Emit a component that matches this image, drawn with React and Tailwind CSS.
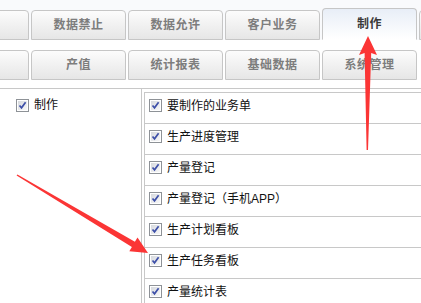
import React from "react";

const topTabs = ["", "数据禁止", "数据允许", "客户业务", "制作", ""];
const subTabs = ["", "产值", "统计报表", "基础数据", "系统管理"];
const items = [
  "要制作的业务单",
  "生产进度管理",
  "产量登记",
  "产量登记（手机APP）",
  "生产计划看板",
  "生产任务看板",
  "产量统计表",
];

const CheckBox = () => (
  <svg width="13" height="13" viewBox="0 0 13 13" className="shrink-0">
    <defs>
      <linearGradient id="cbFill" x1="0" y1="0" x2="1" y2="1">
        <stop offset="0" stopColor="#d6d9de" />
        <stop offset="1" stopColor="#f8f8f8" />
      </linearGradient>
    </defs>
    <rect x="0.5" y="0.5" width="12" height="12" fill="#fff" stroke="#8e9297" />
    <rect x="2" y="2" width="9" height="9" fill="url(#cbFill)" />
    <path d="M3.5 6.5 L5.5 8.8 L9.6 3.2" fill="none" stroke="#3d4fa8" strokeWidth="1.7" />
  </svg>
);

const Tab = ({ label, active, first }) => (
  <div
    className={
      "shrink-0 w-[95px] rounded-t-[4px] border border-[#c6c6c6] flex items-center justify-center text-[12px] font-bold tracking-[0.5px] " +
      (first ? "-ml-[66px] " : "") +
      (active
        ? "h-[32px] -mt-[2px] border-b-white bg-gradient-to-b from-[#e8eef7] to-white text-[#3a3a3a]"
        : "h-[30px] bg-gradient-to-b from-[#fcfcfc] to-[#e6e6e6] text-[#7d7d7d]")
    }
  >
    {label}
  </div>
);

export default function App() {
  return (
    <div
      className="relative w-[421px] h-[303px] overflow-hidden bg-white"
      style={{ fontFamily: '"Liberation Sans", "Noto Sans CJK SC", sans-serif' }}
    >
      <div className="bg-[#f9fafc] pt-[10px]">
        <div className="flex gap-[2px] items-end h-[30px]">
          {topTabs.map((t, i) => (
            <Tab key={i} label={t} first={i === 0} active={t === "制作"} />
          ))}
        </div>
      </div>
      <div className="flex gap-[2px] mt-[10px] h-[30px]">
        {subTabs.map((t, i) => (
          <Tab key={i} label={t} first={i === 0} />
        ))}
      </div>
      <div className="mt-[8px] border-t border-[#c8c8c8] flex h-[240px]">
        <div className="w-[142px] shrink-0 border-r border-[#c8c8c8] pl-[16px] pt-[10px]">
          <div className="flex items-center gap-[5px] text-[12px] text-[#111]">
            <CheckBox />
            <span className="leading-[13px]">制作</span>
          </div>
        </div>
        <div className="ml-[2px] pt-[3px] flex-1">
          <div className="border-t border-l border-[#c8c8c8]">
            {items.map((it) => (
              <div
                key={it}
                className="h-[31px] border-b border-[#c8c8c8] flex items-start gap-[5px] pl-[4px] pt-[6px] text-[12px] text-[#111]"
              >
                <CheckBox />
                <span className="leading-[15px]">{it}</span>
              </div>
            ))}
          </div>
        </div>
      </div>

      <svg className="absolute inset-0 pointer-events-none" width="421" height="303">
        <polygon
          points="368,36 377,55 371.2,53 368,150 366.6,150 364.6,53 359,55"
          fill="#fb3535"
        />
        <polygon
          points="148,253 137.5,237.4 134.9,241.7 17.4,174.6 16.6,175.6 131.9,246.9 129.3,251.2"
          fill="#fb3535"
        />
      </svg>
    </div>
  );
}
